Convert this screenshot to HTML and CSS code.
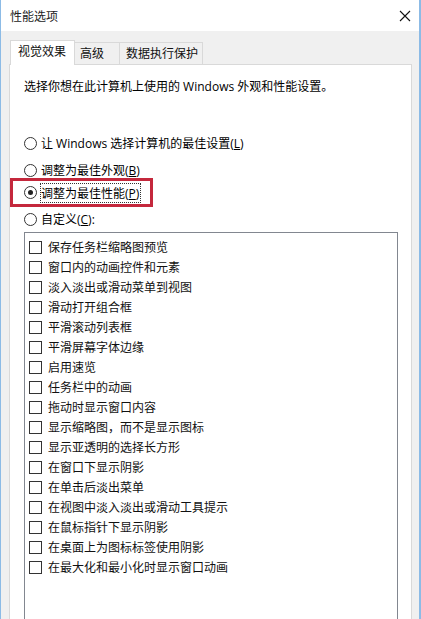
FILE: index.html
```html
<!DOCTYPE html>
<html lang="zh-CN">
<head>
    <meta charset="UTF-8">
    <title>性能选项</title>
    <link rel="stylesheet" href="styles.css">
</head>
<body>
    <div class="window">
        <div class="titlebar">
            <span class="title">性能选项</span>
            <svg class="close" width="12" height="12" viewBox="0 0 12 12">
                <path d="M1 1 L11 11 M11 1 L1 11" stroke="#111" stroke-width="1.1" fill="none"/>
            </svg>
        </div>

        <div class="dialog">
            <div class="tabs">
                <div class="tab active">视觉效果</div>
                <div class="tab">高级</div>
                <div class="tab">数据执行保护</div>
            </div>

            <div class="panel">
                <p class="intro">选择你想在此计算机上使用的 Windows 外观和性能设置。</p>

                <div class="options">
                    <label class="radio first"><span class="dot"></span><span>让 Windows 选择计算机的最佳设置(<u>L</u>)</span></label>
                    <label class="radio"><span class="dot"></span><span>调整为最佳外观(<u>B</u>)</span></label>
                    <div class="highlight">
                        <label class="radio"><span class="dot checked"></span><span class="focus">调整为最佳性能(<u>P</u>)</span></label>
                    </div>
                    <label class="radio"><span class="dot"></span><span>自定义(<u>C</u>):</span></label>
                </div>

                <div class="listbox">
                    <label class="check"><span class="box"></span>保存任务栏缩略图预览</label>
                    <label class="check"><span class="box"></span>窗口内的动画控件和元素</label>
                    <label class="check"><span class="box"></span>淡入淡出或滑动菜单到视图</label>
                    <label class="check"><span class="box"></span>滑动打开组合框</label>
                    <label class="check"><span class="box"></span>平滑滚动列表框</label>
                    <label class="check"><span class="box"></span>平滑屏幕字体边缘</label>
                    <label class="check"><span class="box"></span>启用速览</label>
                    <label class="check"><span class="box"></span>任务栏中的动画</label>
                    <label class="check"><span class="box"></span>拖动时显示窗口内容</label>
                    <label class="check"><span class="box"></span>显示缩略图，而不是显示图标</label>
                    <label class="check"><span class="box"></span>显示亚透明的选择长方形</label>
                    <label class="check"><span class="box"></span>在窗口下显示阴影</label>
                    <label class="check"><span class="box"></span>在单击后淡出菜单</label>
                    <label class="check"><span class="box"></span>在视图中淡入淡出或滑动工具提示</label>
                    <label class="check"><span class="box"></span>在鼠标指针下显示阴影</label>
                    <label class="check"><span class="box"></span>在桌面上为图标标签使用阴影</label>
                    <label class="check"><span class="box"></span>在最大化和最小化时显示窗口动画</label>
                </div>
            </div>
        </div>
    </div>
</body>
</html>
```

FILE: styles.css
```css
body {
    margin: 0;
    font-family: "Open Sans", "Noto Sans CJK SC", sans-serif;
    font-size: 12px;
    color: #000;
    background: #fff;
}
.window {
    width: 421px;
    height: 619px;
    box-sizing: border-box;
    border-left: 1px solid #8cbbe6;
    border-right: 2px solid #8cbbe6;
    overflow: hidden;
    display: flex;
    flex-direction: column;
}
.titlebar {
    height: 31px;
    background: #fff;
    display: flex;
    align-items: center;
    justify-content: space-between;
    padding: 0 8px 0 9px;
    flex-shrink: 0;
}
.title {
    font-size: 12px;
    color: #222;
}
.close {
    display: block;
}

.dialog {
    flex: 1;
    background: #f0f0f0;
    padding: 9px 7px 0 8px;
    display: flex;
    flex-direction: column;
}

/* Abas */
.tabs {
    display: flex;
    align-items: flex-end;
    height: 24px;
    position: relative;
    z-index: 1;
}
.tab {
    height: 22px;
    line-height: 21px;
    padding: 0 5px;
    border: 1px solid #d9d9d9;
    border-bottom: none;
    border-left: none;
    box-sizing: border-box;
    background: #f0f0f0;
    color: #111;
}
.tab.active {
    height: 25px;
    margin-bottom: -1px;
    padding: 0 8px 0 7px;
    background: #fff;
    border-left: 1px solid #d9d9d9;
    line-height: 22px;
    margin-left: 1px;
}
.tab:nth-child(2) {
    width: 45px;
}
.tab:nth-child(3) {
    padding: 0 4px 0 6px;
}

.panel {
    flex: 1;
    background: #fff;
    border: 1px solid #d9d9d9;
    border-bottom: none;
    padding: 0 13px 0 14px;
}
.intro {
    margin: 14px 0 0 0;
    line-height: 16px;
}

/* Botões de opção */
.options {
    margin-top: 40px;
}
.radio {
    display: flex;
    align-items: center;
    height: 16px;
}
.radio.first {
    margin-bottom: 11px;
}
.radio .dot {
    width: 11px;
    height: 11px;
    border: 1px solid #333;
    border-radius: 50%;
    margin-right: 4px;
    position: relative;
    flex-shrink: 0;
}
.radio .dot.checked::after {
    content: "";
    position: absolute;
    left: 3px;
    top: 3px;
    width: 5px;
    height: 5px;
    border-radius: 50%;
    background: #222;
}
.highlight {
    margin: 0 0 4px -14px;
    width: 143px;
    height: 29px;
    box-sizing: border-box;
    border: 3px solid #c4283c;
    padding-left: 11px;
    display: flex;
    align-items: center;
}
.focus {
    outline: 1px dotted #333;
    outline-offset: 0;
    padding-right: 1px;
}
u {
    text-decoration-thickness: 1px;
}

/* Lista de efeitos */
.listbox {
    margin-top: 5px;
    border: 1px solid #828790;
    border-bottom: none;
    height: 400px;
    padding: 4px 0 0 4px;
}
.check {
    display: flex;
    align-items: center;
    height: 20px;
    color: #111;
}
.check .box {
    width: 11px;
    height: 11px;
    border: 1px solid #333;
    margin-right: 6px;
    flex-shrink: 0;
}
```
